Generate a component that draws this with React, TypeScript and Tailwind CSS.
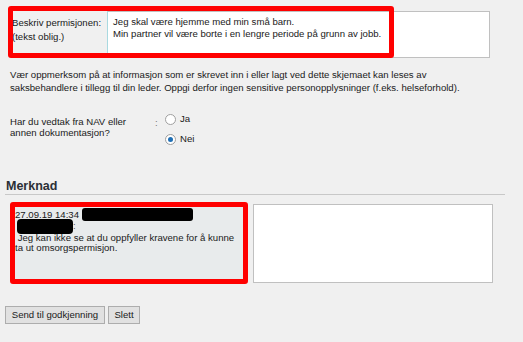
import React from 'react';

function Radio({ label, checked }: { label: string; checked?: boolean }) {
  return (
    <div className="flex h-[20px] items-center">
      <span className="flex h-[11px] w-[11px] items-center justify-center rounded-full border border-[#a0a0a0] bg-white">
        {checked && <span className="h-[5px] w-[5px] rounded-full bg-[#1f6fb5]" />}
      </span>
      <span className="ml-[4px]">{label}</span>
    </div>
  );
}

function App() {
  return (
    <div className="relative h-[342px] w-[523px] overflow-hidden bg-[#f0f0f0] font-['Liberation_Sans',Arial,sans-serif] text-[9.6px] text-[#1a1a1a]">
      {/* Beskrivelse */}
      <div className="flex pl-[5px] pt-[11px]">
        <div className="h-[47px] w-[102px] pl-[7px] pt-[5px] leading-[13.5px] whitespace-nowrap">
          Beskriv permisjonen:
          <br />
          (tekst oblig.)
        </div>
        <div className="h-[47px] w-[383px] border border-[#c0c0c0] border-l-[#a9d9e0] bg-white pl-[5px] pt-[4px] leading-[12px] whitespace-nowrap">
          Jeg skal være hjemme med min små barn.
          <br />
          Min partner vil være borte i en lengre periode på grunn av jobb.
        </div>
      </div>

      {/* Info */}
      <p className="mt-[10px] pl-[10px] leading-[13px] whitespace-nowrap">
        Vær oppmerksom på at informasjon som er skrevet inn i eller lagt ved dette skjemaet kan leses av
        <br />
        saksbehandlere i tillegg til din leder. Oppgi derfor ingen sensitive personopplysninger (f.eks. helseforhold).
      </p>

      {/* Spørsmål */}
      <div className="mt-[15px] flex items-start pl-[10px]">
        <div className="mt-[7px] w-[145px] leading-[11px]">
          Har du vedtak fra NAV eller
          <br />
          annen dokumentasjon?
        </div>
        <div className="mt-[8px] w-[10px] leading-[11px] text-[#777]">:</div>
        <div className="flex flex-col">
          <Radio label="Ja" />
          <Radio label="Nei" checked />
        </div>
      </div>

      {/* Merknad */}
      <div className="mx-[5px] mt-[29px] w-[500px] border-b border-[#c8c8c8] pl-[1px]">
        <h2 className="text-[12.5px] leading-[16px] font-bold text-[#2b2f36]">Merknad</h2>
      </div>

      <div className="mt-[9px] flex">
        <div className="ml-[12px] h-[79px] w-[234px] bg-[#e8ebec] pl-[3px] pt-[5px] leading-[11px] whitespace-nowrap">
          <div className="flex h-[11px] items-center">
            27.09.19 14:34
            <span className="ml-[3px] inline-block h-[13px] w-[111px] shrink-0 rounded-[3px] bg-black" />
          </div>
          <div className="flex h-[11px] items-center">
            <span className="ml-[2px] mt-[2px] inline-block h-[15px] w-[56px] shrink-0 rounded-[4px] bg-black" />
            <span className="text-[#555]">:</span>
          </div>
          <div className="mt-[1px]">&nbsp;Jeg kan ikke se at du oppfyller kravene for å kunne</div>
          <div className="leading-[10px]">ta ut omsorgspermisjon.</div>
        </div>
        <div className="ml-[7px] h-[79px] w-[240px] border border-[#c0c0c0] bg-white" />
      </div>

      {/* Knapper */}
      <div className="mt-[23px] flex gap-[3px] pl-[5px]">
        <button className="h-[18px] w-[100px] border border-[#adadad] bg-[#e1e1e1] text-center leading-[16px]">
          Send til godkjenning
        </button>
        <button className="h-[18px] w-[32px] border border-[#adadad] bg-[#e1e1e1] text-center leading-[16px]">
          Slett
        </button>
      </div>

      {/* Markeringer */}
      <div className="absolute left-[8px] top-[6px] h-[52px] w-[386px] rounded-[3px] border-[5px] border-[#ff0000]" />
      <div className="absolute left-[10px] top-[202px] h-[82px] w-[238px] rounded-[3px] border-[5px] border-[#ff0000]" />
    </div>
  );
}

export default App;
